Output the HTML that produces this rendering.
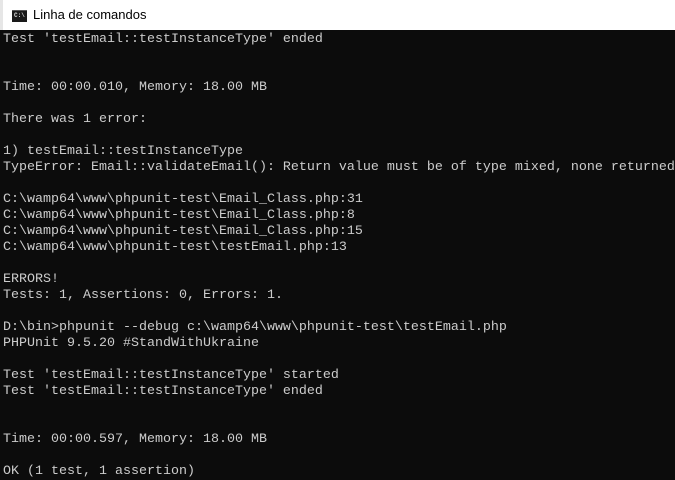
<!DOCTYPE html>
<html><head><style>
body{margin:0;width:675px;height:479px;overflow:hidden;background:#0c0c0c;position:relative}
.tb{position:absolute;left:0;top:0;width:675px;height:30px;background:#fff}
.strip{position:absolute;left:0;top:0;width:3px;height:30px;background:#e6e6e6}
.ic{position:absolute;left:12px;top:10px;width:15px;height:11px;background:#1a1a1a;border-top:1px solid #555}
.ic span{position:absolute;left:2px;top:1px;color:#ddd;font:bold 6px "Liberation Mono",monospace}
.tt{position:absolute;left:33px;top:7px;font:13px "Liberation Sans",sans-serif;color:#000}
pre{position:absolute;left:3px;top:32px;margin:0;font:13.33px/16px "Liberation Mono",monospace;color:#cccccc;white-space:pre}
</style></head><body>
<div class="tb"><div class="strip"></div><div class="ic"><span>C:\</span></div><div class="tt">Linha de comandos</div></div>
<pre>Test 'testEmail::testInstanceType' ended


Time: 00:00.010, Memory: 18.00 MB

There was 1 error:

1) testEmail::testInstanceType
TypeError: Email::validateEmail(): Return value must be of type mixed, none returned

C:\wamp64\www\phpunit-test\Email_Class.php:31
C:\wamp64\www\phpunit-test\Email_Class.php:8
C:\wamp64\www\phpunit-test\Email_Class.php:15
C:\wamp64\www\phpunit-test\testEmail.php:13

ERRORS!
Tests: 1, Assertions: 0, Errors: 1.

D:\bin>phpunit --debug c:\wamp64\www\phpunit-test\testEmail.php
PHPUnit 9.5.20 #StandWithUkraine

Test 'testEmail::testInstanceType' started
Test 'testEmail::testInstanceType' ended


Time: 00:00.597, Memory: 18.00 MB

OK (1 test, 1 assertion)</pre>
</body></html>
